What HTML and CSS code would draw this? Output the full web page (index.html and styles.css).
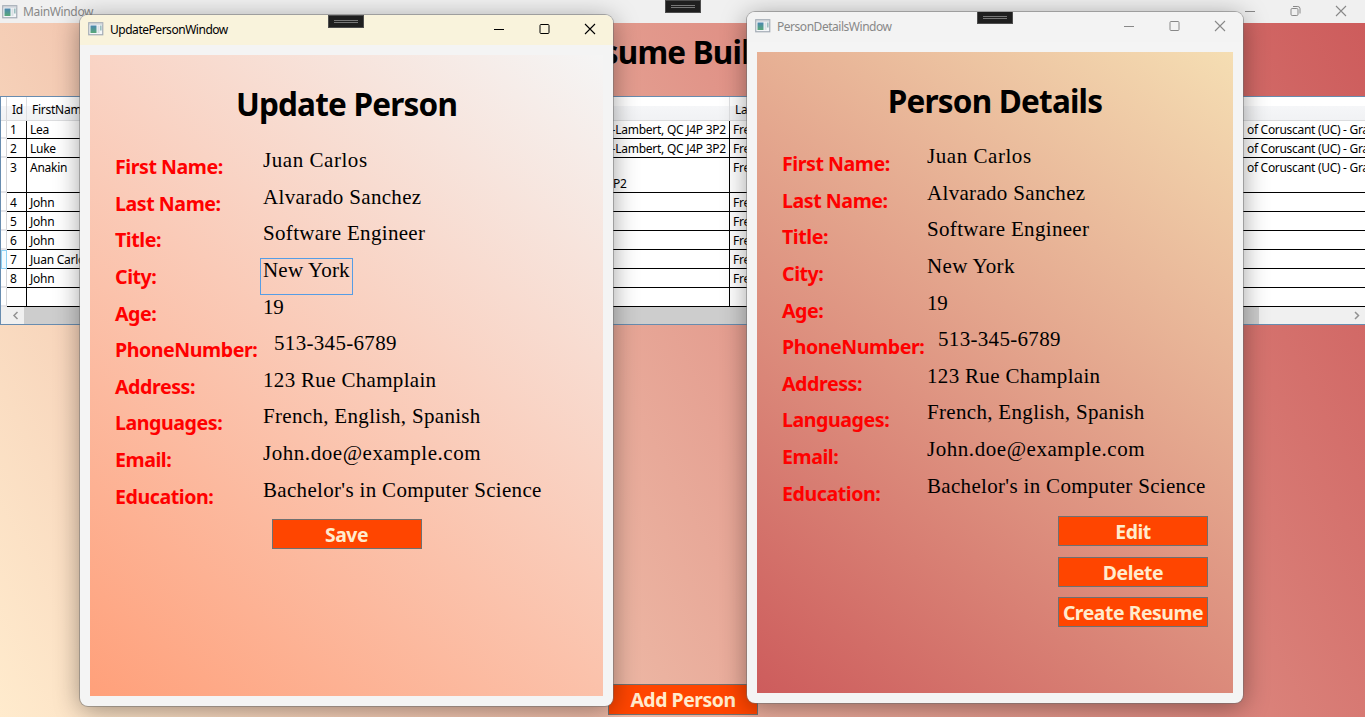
FILE: index.html
```html
<!DOCTYPE html>
<html lang="en">
<head>
<meta charset="utf-8">
<title>MainWindow</title>
<link rel="stylesheet" href="styles.css">
</head>
<body>
<svg width="0" height="0" class="defs">
  <defs>
    <linearGradient id="ag" x1="0" y1="0" x2="0" y2="1"><stop offset="0" stop-color="#4a86b0"/><stop offset="1" stop-color="#58a878"/></linearGradient>
    <symbol id="app" viewBox="0 0 16 14"><rect x=".75" y=".75" width="14" height="12" fill="#f4f6f8" stroke="#a3abb5" stroke-width="1.2"/><path d="M1 2h14" stroke="#bfc5cd"/><rect x="2.5" y="3.5" width="6" height="7.5" fill="url(#ag)"/><rect x="9.5" y="3.5" width="2" height="7.5" fill="#d9dfe4"/><rect x="12" y="3.5" width="1.6" height="5" fill="#9cbfc0"/></symbol>
    <symbol id="min" viewBox="0 0 12 12"><path d="M1 6.5h10" stroke="currentColor"/></symbol>
    <symbol id="max" viewBox="0 0 12 12"><rect x="1" y="1.5" width="9" height="9" rx="1" fill="none" stroke="currentColor"/></symbol>
    <symbol id="res" viewBox="0 0 12 12"><rect x="1" y="3.5" width="7" height="7" rx="1.2" fill="none" stroke="currentColor"/><path d="M3 1.5h4.800a2.200 2.200 0 0 1 2.200 2.200v4.800" fill="none" stroke="currentColor"/></symbol>
    <symbol id="close" viewBox="0 0 12 12"><path d="M1 1l10 10M11 1L1 11" stroke="currentColor" stroke-width="1.1"/></symbol>
  </defs>
</svg>

<main class="main">
  <header class="bar main-bar">
    <svg class="app"><use href="#app"/></svg><span class="bar-title">MainWindow</span>
    <nav class="controls"><svg><use href="#min"/></svg><svg><use href="#res"/></svg><svg><use href="#close"/></svg></nav>
  </header>
  <h1 class="main-heading">Resume Builder</h1>
  <section class="grid">
    <div class="row head"><i></i><b>Id</b><b>FirstName</b><b></b><b>Languages</b><b></b></div>
    <div class="row first"><i></i><span>1</span><span>Lea</span><span class="end">Saint-Lambert, QC J4P 3P2</span><span>French</span><span class="edu">of Coruscant (UC) - Graduated</span></div>
    <div class="row"><i></i><span>2</span><span>Luke</span><span class="end">Saint-Lambert, QC J4P 3P2</span><span>French</span><span class="edu">of Coruscant (UC) - Graduated</span></div>
    <div class="row tall"><i></i><span>3</span><span>Anakin</span><span class="wrapped">P2</span><span>French</span><span class="edu">of Coruscant (UC) - Graduated</span></div>
    <div class="row"><i></i><span>4</span><span>John</span><span></span><span>French</span><span></span></div>
    <div class="row"><i></i><span>5</span><span>John</span><span></span><span>French</span><span></span></div>
    <div class="row"><i></i><span>6</span><span>John</span><span></span><span>French</span><span></span></div>
    <div class="row current"><i></i><span>7</span><span>Juan Carlos</span><span></span><span>French</span><span></span></div>
    <div class="row"><i></i><span>8</span><span>John</span><span></span><span>French</span><span></span></div>
    <div class="row"><i></i><span></span><span></span><span></span><span></span><span></span></div>
    <div class="scroll"><svg viewBox="0 0 17 17"><path d="M10.500 5L7 8.500L10.500 12" /></svg><div class="thumb"></div><svg viewBox="0 0 17 17"><path d="M7 5l3.500 3.500L7 12"/></svg></div>
  </section>
  <button class="btn add">Add Person</button>
  <div class="grip main-grip"></div>
</main>

<section class="window update">
  <header class="bar"><svg class="app"><use href="#app"/></svg><span class="bar-title">UpdatePersonWindow</span>
    <nav class="controls"><svg><use href="#min"/></svg><svg><use href="#max"/></svg><svg><use href="#close"/></svg></nav></header>
  <div class="panel">
    <h1>Update Person</h1>
    <dl>
      <div><dt>First Name:</dt><dd class="loose">Juan Carlos</dd></div>
      <div><dt>Last Name:</dt><dd>Alvarado Sanchez</dd></div>
      <div><dt>Title:</dt><dd>Software Engineer</dd></div>
      <div><dt>City:</dt><dd class="focused">New York</dd></div>
      <div><dt>Age:</dt><dd class="age">19</dd></div>
      <div><dt>PhoneNumber:</dt><dd class="phone">513-345-6789</dd></div>
      <div><dt>Address:</dt><dd>123 Rue Champlain</dd></div>
      <div><dt>Languages:</dt><dd>French, English, Spanish</dd></div>
      <div><dt>Email:</dt><dd class="loose">John.doe@example.com</dd></div>
      <div><dt>Education:</dt><dd>Bachelor's in Computer Science</dd></div>
    </dl>
    <div class="actions"><button class="btn">Save</button></div>
  </div>
  <div class="grip"></div>
</section>

<section class="window details">
  <header class="bar"><svg class="app"><use href="#app"/></svg><span class="bar-title">PersonDetailsWindow</span>
    <nav class="controls"><svg><use href="#min"/></svg><svg><use href="#max"/></svg><svg><use href="#close"/></svg></nav></header>
  <div class="panel">
    <h1>Person Details</h1>
    <dl>
      <div><dt>First Name:</dt><dd class="loose">Juan Carlos</dd></div>
      <div><dt>Last Name:</dt><dd>Alvarado Sanchez</dd></div>
      <div><dt>Title:</dt><dd>Software Engineer</dd></div>
      <div><dt>City:</dt><dd>New York</dd></div>
      <div><dt>Age:</dt><dd class="age">19</dd></div>
      <div><dt>PhoneNumber:</dt><dd class="phone">513-345-6789</dd></div>
      <div><dt>Address:</dt><dd>123 Rue Champlain</dd></div>
      <div><dt>Languages:</dt><dd>French, English, Spanish</dd></div>
      <div><dt>Email:</dt><dd class="loose">John.doe@example.com</dd></div>
      <div><dt>Education:</dt><dd>Bachelor's in Computer Science</dd></div>
    </dl>
    <div class="actions"><button class="btn">Edit</button><button class="btn">Delete</button><button class="btn">Create Resume</button></div>
  </div>
  <div class="grip"></div>
</section>
</body>
</html>
```

FILE: styles.css
```css
* { box-sizing: border-box; }
body {
  margin: 0; width: 1365px; height: 717px; overflow: hidden; position: relative;
  font-family: "Segoe UI", "Noto Sans", sans-serif; font-size: 12px; color: #000;
}
.defs { position: absolute; }
h1, dl, dd { margin: 0; }
h1 { font-size: 31.5px; line-height: 42px; font-weight: 700; text-align: center; letter-spacing: -.8px; }

.main {
  position: relative; width: 1365px; height: 717px; overflow: hidden;
  display: flex; flex-direction: column;
  background: linear-gradient(63.05deg, #ffebcd, #cd5c5c) 0 23px / 1365px 694px no-repeat;
}
.bar { display: flex; align-items: center; height: 30px; padding: 0 17px 2px 8px; color: #888; }
.main-bar { height: 23px; padding: 0 18px 0 2px; background: #f0f0f0; flex: none; }
.app { width: 16px; height: 14px; margin-right: 6px; }
.main-bar .app { margin-right: 5px; }
.bar-title { letter-spacing: -.47px; }
.main-bar .bar-title { letter-spacing: -.35px; }
.controls { margin-left: auto; display: flex; gap: 33.5px; }
.controls svg { width: 12px; height: 12px; }
.main-bar .controls { padding-bottom: 2px; }
.main-heading { height: 73px; padding-top: 8px; flex: none; }

.grid {
  width: 1366px; height: 229px; flex: none; background: #fff;
  border: 1px solid #688caf; border-right: 0;
  display: flex; flex-direction: column; overflow: hidden;
}
.row {
  display: grid; grid-template-columns: 6px 20px 513px 190px 513px 1fr;
  height: 19px; line-height: 19px; flex: none; white-space: nowrap; letter-spacing: -.25px;
}
.row > * { overflow: hidden; }
.row i { border-bottom: 2px solid #e6e6ea; border-right: 1px solid #d5d5d8; }
.row span { border-right: 1px solid #000; border-bottom: 1px solid #000; padding-left: 3px; }
.row .end { display: flex; justify-content: flex-end; padding-right: 3px; }
.row.first { height: 18px; line-height: 17px; }
.row.tall { height: 35px; }
.row .wrapped { padding: 17px 0 0 73px; line-height: 17px; }
.row .edu { padding-left: 4px; letter-spacing: -.3px; }
.row.current i { border: 1px solid #8fd3f5; background: #f2fbff; }
.head { height: 24px; line-height: 25px; background: linear-gradient(#fff 0 38%, #f5f6f8 40%, #f1f2f4); border-bottom: 1px solid #dcdddf; }
.head b { font-weight: 400; padding-left: 5px; border-right: 1px solid #dfe0e2; }
.head i { border-bottom: 0; }
.scroll { display: flex; height: 17px; background: #f0f0f0; flex: none; padding-right: 1px; }
.scroll svg { width: 17px; height: 17px; flex: none; fill: none; stroke: #929292; stroke-width: 1.5; }
.scroll svg:first-child { margin-left: 6px; }
.scroll svg:last-child { margin-left: auto; }
.thumb { width: 1235px; background: #cdcdcd; }

.btn {
  display: block; width: 150px; height: 30px; padding: 1px 0 0; margin: 0;
  border: 1px solid #707070; border-radius: 0; background: #ff4500; color: #ffebcd;
  font: 700 19.4px/28px "Segoe UI", "Noto Sans", sans-serif; letter-spacing: -.45px; white-space: nowrap;
}
.add { margin: auto auto 2px 608px; height: 31px; }

.grip {
  position: absolute; left: 248px; top: -1px; width: 36px; height: 13px;
  background: linear-gradient(#777, #777) 50% 4px / 24px 1px no-repeat,
              linear-gradient(#777, #777) 50% 6px / 24px 1px no-repeat, #1f1f1f;
  border: 1px solid #4d4d4d;
}
.main-grip { left: 665px; top: 0; }

.window {
  position: absolute; overflow: hidden; background: #f4f4f4; border-radius: 8px;
  box-shadow: 0 0 0 1px rgba(110,110,110,.5), 0 4px 26px rgba(0,0,0,.38);
}
.window .bar { background: #f3f3f3; }
.update { left: 80px; top: 15px; width: 533px; height: 691px; }
.update .bar { background: #f9f3dc; color: #000; }
.details { left: 747px; top: 12px; width: 496px; height: 691px; }
.update .grip { top: 0; }
.details .grip { left: 230px; }
.panel { margin: 10px; height: 641px; padding: 28px 25px 0; }
.update .panel { background: linear-gradient(38.67deg, #ffa07a, #f5f5f5); }
.details .panel { background: linear-gradient(36.6deg, #cd5c5c, #f5deb3); }
dl { padding-top: 24px; font-size: 19.6px; white-space: nowrap; }
dl div { display: flex; height: 36.65px; line-height: 36px; }
dt { flex: none; width: 148px; color: #f00; font-weight: 700; letter-spacing: -.45px; }
dd { height: 37px; line-height: 22px; font-family: Georgia, "Liberation Serif", serif; font-size: 21px; letter-spacing: .32px; }
.details dt { width: 145px; }
.details dd { margin-top: -1px; }
dd.loose { letter-spacing: .55px; }
dd.age { letter-spacing: -.3px; }
dd.phone { padding-left: 11px; }
dd.focused { border: 1px solid #569de5; margin: -1px 0 0 -3px; padding: 0 2px; letter-spacing: .2px; }
.actions { display: flex; flex-direction: column; gap: 10.500px; align-items: flex-end; padding-top: 4px; }
.update .actions { align-items: center; }
```
